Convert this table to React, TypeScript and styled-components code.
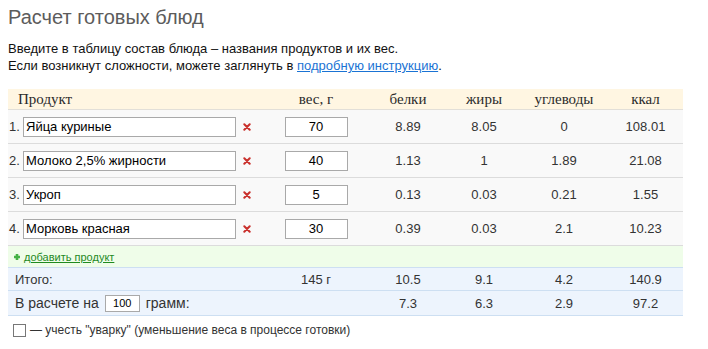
import styled, { createGlobalStyle } from 'styled-components';

const GlobalStyle = createGlobalStyle`
  body {
    margin: 0;
    background: #fff;
    font-family: 'Liberation Sans', Arial, sans-serif;
    color: #222;
  }
`;

const COLS = '264px 88px 96px 56px 104px 59px';

const Page = styled.div`
  padding: 6px 0 0 8px;
  width: 675px;
`;

const Title = styled.h1`
  margin: 0;
  font-size: 20px;
  line-height: 23px;
  font-weight: normal;
  color: #5c5c5c;
`;

const Intro = styled.p`
  margin: 11px 0 0;
  font-size: 13px;
  line-height: 17px;
  color: #111;
`;

const Link = styled.a`
  color: #1a73d4;
  text-decoration: underline;
`;

const Table = styled.div`
  margin-top: 15px;
`;

const Row = styled.div<{ $bg: string; $border: string; $h: number }>`
  display: grid;
  grid-template-columns: ${COLS};
  padding-right: 8px;
  align-items: center;
  height: ${(p) => p.$h}px;
  background: ${(p) => p.$bg};
  border-bottom: 1px solid ${(p) => p.$border};
`;

const HeadCell = styled.div<{ $left?: boolean }>`
  font-family: 'Liberation Serif', 'Times New Roman', serif;
  font-size: 15px;
  color: #2a2a2a;
  text-align: ${(p) => (p.$left ? 'left' : 'center')};
  padding-left: ${(p) => (p.$left ? '10px' : '0')};
`;

const Cell = styled.div`
  font-size: 13px;
  color: #333;
  text-align: center;
`;

const ProductCell = styled.div`
  display: flex;
  align-items: center;
  padding-left: 1px;
`;

const Num = styled.span`
  width: 14px;
  font-size: 13px;
  color: #333;
`;

const TextInput = styled.input<{ $w: number; $center?: boolean }>`
  box-sizing: border-box;
  width: ${(p) => p.$w}px;
  height: 20px;
  margin: 0;
  padding: 0 2px;
  border: 1px solid #a9a9a9;
  background: #fff;
  font-family: 'Liberation Sans', Arial, sans-serif;
  font-size: 13px;
  color: #000;
  text-align: ${(p) => (p.$center ? 'center' : 'left')};
  outline: none;
`;

const Remove = styled.span`
  display: inline-flex;
  margin-left: 7px;
`;

const AddLink = styled.a`
  display: flex;
  align-items: center;
  gap: 3px;
  padding-left: 5px;
  font-size: 11px;
  color: #1f8a1f;
  text-decoration: underline;
`;

const TotalLabel = styled.div<{ $size?: number }>`
  display: flex;
  align-items: center;
  padding-left: 7px;
  font-size: ${(p) => p.$size ?? 13}px;
  color: #333;
`;

const SmallInput = styled.input`
  box-sizing: border-box;
  width: 35px;
  height: 17px;
  margin: 0 6px;
  padding: 0;
  border: 1px solid #a9a9a9;
  background: #fff;
  font-family: 'Liberation Sans', Arial, sans-serif;
  font-size: 11px;
  text-align: center;
  color: #000;
`;

const CheckLine = styled.label`
  display: flex;
  align-items: center;
  gap: 4px;
  margin-top: 7px;
  padding-left: 5px;
  font-size: 12px;
  color: #333;
`;

const Box = styled.span`
  box-sizing: border-box;
  width: 13px;
  height: 13px;
  border: 1px solid #777;
  background: #fff;
`;

const Cross = () => (
  <svg width="8" height="8" viewBox="0 0 8 8">
    <path d="M1.3 1.3 L6.7 6.7 M6.7 1.3 L1.3 6.7" stroke="#c9302c" strokeWidth="2" strokeLinecap="round" />
  </svg>
);

const Plus = () => (
  <svg width="8" height="8" viewBox="0 0 8 8">
    <path d="M4 1 V7 M1 4 H7" stroke="#45b245" strokeWidth="2.6" />
  </svg>
);

const products = [
  { name: 'Яйца куриные', w: '70', b: '8.89', f: '8.05', c: '0', k: '108.01' },
  { name: 'Молоко 2,5% жирности', w: '40', b: '1.13', f: '1', c: '1.89', k: '21.08' },
  { name: 'Укроп', w: '5', b: '0.13', f: '0.03', c: '0.21', k: '1.55' },
  { name: 'Морковь красная', w: '30', b: '0.39', f: '0.03', c: '2.1', k: '10.23' },
];

export default function App() {
  return (
    <Page>
      <GlobalStyle />
      <Title>Расчет готовых блюд</Title>
      <Intro>
        Введите в таблицу состав блюда – названия продуктов и их вес.
        <br />
        Если возникнут сложности, можете заглянуть в <Link href="#">подробную инструкцию</Link>.
      </Intro>
      <Table>
        <Row $bg="#fff6e2" $border="#e2dfd8" $h={20}>
          <HeadCell $left>Продукт</HeadCell>
          <HeadCell>вес, г</HeadCell>
          <HeadCell>белки</HeadCell>
          <HeadCell>жиры</HeadCell>
          <HeadCell>углеводы</HeadCell>
          <HeadCell>ккал</HeadCell>
        </Row>
        {products.map((p, i) => (
          <Row key={p.name} $bg="#f9f9f9" $border="#dcdcdc" $h={33}>
            <ProductCell>
              <Num>{i + 1}.</Num>
              <TextInput $w={213} defaultValue={p.name} />
              <Remove>
                <Cross />
              </Remove>
            </ProductCell>
            <Cell>
              <TextInput $w={63} $center defaultValue={p.w} />
            </Cell>
            <Cell>{p.b}</Cell>
            <Cell>{p.f}</Cell>
            <Cell>{p.c}</Cell>
            <Cell>{p.k}</Cell>
          </Row>
        ))}
        <Row $bg="#effde9" $border="#cddff2" $h={21}>
          <AddLink href="#">
            <Plus />
            добавить продукт
          </AddLink>
        </Row>
        <Row $bg="#edf4fd" $border="#cddff2" $h={22}>
          <TotalLabel>Итого:</TotalLabel>
          <Cell>145 г</Cell>
          <Cell>10.5</Cell>
          <Cell>9.1</Cell>
          <Cell>4.2</Cell>
          <Cell>140.9</Cell>
        </Row>
        <Row $bg="#edf4fd" $border="#cddff2" $h={24}>
          <TotalLabel $size={14}>
            В расчете на <SmallInput defaultValue="100" /> грамм:
          </TotalLabel>
          <Cell />
          <Cell>7.3</Cell>
          <Cell>6.3</Cell>
          <Cell>2.9</Cell>
          <Cell>97.2</Cell>
        </Row>
      </Table>
      <CheckLine>
        <Box />— учесть "уварку" (уменьшение веса в процессе готовки)
      </CheckLine>
    </Page>
  );
}
